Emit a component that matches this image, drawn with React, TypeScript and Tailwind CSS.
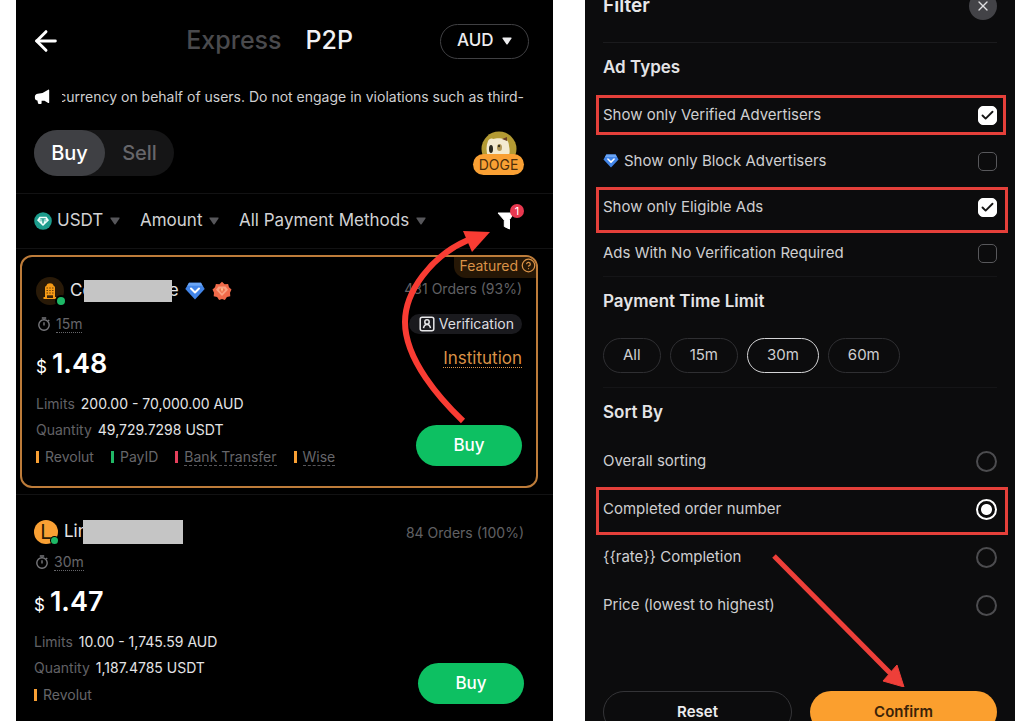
import React, { useState } from "react";
import { ArrowLeft, Check, CircleHelp, X } from "lucide-react";

interface IPayment {
  name: string;
  bar: string;
  hint?: boolean;
}

interface IOfferProps {
  avatar: React.ReactNode;
  name: React.ReactNode;
  time: string;
  price: string;
  limits: string;
  quantity: string;
  orders: string;
  payments: IPayment[];
  extra?: React.ReactNode;
}

interface IFilterSelectProps {
  label: string;
  icon?: React.ReactNode;
}

interface IOptionRowProps {
  id: string;
  label: string;
  icon?: React.ReactNode;
  ring?: string;
  children: React.ReactNode;
  height: string;
}

const MegaphoneIcon = () => (
  <svg viewBox="0 0 16 16" className="h-4 w-4 shrink-0" fill="#fff">
    <path d="M15.200 1.200v12.200c0 .5-.6.8-1 .5L10.500 11.800H7.600v2.200c0 .6-.4 1-1 1H5c-.5 0-.9-.3-1-.8l-.6-2.700C1.900 11.200.9 10.200.9 8.900V7.600c0-1.600 1.200-2.700 2.800-2.900l4.800-.8 5.700-3.200c.4-.3 1 0 1 .5z" />
  </svg>
);

const DogeIcon = () => (
  <svg viewBox="0 0 36 36" className="h-9 w-9">
    <circle cx="18" cy="18" r="17.500" fill="#b39a33" />
    <path d="M7 26c-2-6-2-11 0-16 1-2 3-3 5-2 3-1 8-1 11 0 3 0 5 3 5 7 1 4 1 8-1 11z" fill="#f3ead0" />
    <path d="M21 8l5-2v4z" fill="#6b3f28" />
    <ellipse cx="10" cy="18" rx="2" ry="4" fill="#2b2a20" />
    <ellipse cx="18.500" cy="16.500" rx="2.500" ry="3.500" fill="#b49a5a" />
    <circle cx="18" cy="15" r="1.200" fill="#3b3420" />
  </svg>
);

const UsdtIcon = () => (
  <svg viewBox="0 0 18 18" className="h-[18px] w-[18px] shrink-0">
    <circle cx="9" cy="9" r="8.800" fill="#1c9c8c" />
    <path d="M5.500 4.800h7L15 8.300 9 14 3 8.300z" fill="#f0fffc" />
    <path d="M6.300 6.300h5.400v1.300H9.700v3.800H8.300V7.600h-2z" fill="#1c9c8c" />
    <path d="M5.500 8.800h7" stroke="#1c9c8c" strokeWidth=".6" />
  </svg>
);

const FunnelIcon = () => (
  <svg viewBox="0 0 18 18" className="h-[18px] w-[18px]" fill="#fff">
    <path d="M1 1h16L12.500 7.600V17l-5.200-2.500V8.200z" stroke="#fff" strokeLinejoin="round" />
  </svg>
);

const DiamondIcon = ({ className }: { className: string }) => (
  <svg viewBox="0 0 20 18" className={className}>
    <path d="M4 .8h12l3.700 6.200L10 17.500.3 7z" fill="#4285e8" />
    <path d="M4 .8h12l1.500 3H2.300z" fill="#6aa5f5" />
    <path d="M6 6.500l4 4 4-4" stroke="#fff" strokeWidth="2" fill="none" strokeLinecap="round" strokeLinejoin="round" />
  </svg>
);

const RosetteIcon = () => (
  <svg viewBox="0 0 20 20" className="h-5 w-5">
    <path
      d="M10 .8l2.600 2.400 3.500-.3.900 3.400 2.500 2.300-1.500 3.100.3 3.500-3.400.9L12.900 19 10 17.900 7.100 19l-2-2.900-3.400-.9.300-3.500L.5 8.600 3 6.300l.9-3.400 3.500.3z"
      fill="#f06a4a"
    />
    <path d="M6.500 5.500h7l2.500 3.200-6 6.300-6-6.300z" fill="#f9a182" />
    <path d="M8 7.500h4l1.200 1.600L10 12.500 6.800 9.100z" fill="#ef7350" />
    <path d="M9 7.500h2L10 11z" fill="#ffd9a0" />
  </svg>
);

const BuildingAvatar = () => (
  <span className="relative flex h-7 w-7 items-center justify-center rounded-full bg-[#291a08]">
    <svg viewBox="0 0 16 18" className="h-[18px] w-4">
      <path d="M3 15V5.500C3 4.500 4 4 4.500 3.500 5 2 6 1.200 8 1.200s3 .8 3.500 2.300c.5.500 1.500 1 1.500 2V15h1.500v2h-13v-2z" fill="#f59a16" />
      <path d="M4.500 6h7M4.500 8.500h7M4.500 11h7" stroke="#6b4108" strokeWidth="1.200" strokeDasharray="1.500 1.250" />
      <path d="M5 13.300h6V16H5z" fill="#38220a" />
    </svg>
    <span className="absolute -right-px bottom-0 h-2 w-2 rounded-full bg-[#1db866] ring-2 ring-black" />
  </span>
);

const LetterAvatar = () => (
  <span className="relative flex h-6 w-6 items-center justify-center rounded-full bg-[#f9a034] text-xl text-[#2a1a05]">
    L
    <span className="absolute right-0 bottom-0 h-[7px] w-[7px] rounded-full bg-[#1db866] ring-1 ring-black" />
  </span>
);

const StopwatchIcon = () => (
  <svg viewBox="0 0 14 14" className="h-[14px] w-[14px]" fill="none" stroke="#77777b" strokeWidth="1.400">
    <circle cx="7" cy="8" r="5.200" />
    <path d="M4.800 1h4.400M7 5.200v3.300M11.200 3l1 1" />
  </svg>
);

const VerifyIcon = () => (
  <svg viewBox="0 0 16 16" className="h-4 w-4" fill="none" stroke="#e6e6e8" strokeWidth="1.500">
    <rect x="1.200" y="1.200" width="13.600" height="13.600" rx="2" />
    <circle cx="8" cy="6" r="2.200" />
    <path d="M4.500 12.200c.4-2.400 1.600-3.700 3.500-3.700s3.100 1.300 3.500 3.700" />
  </svg>
);

const Caret = ({ className }: { className: string }) => (
  <svg viewBox="0 0 10 8" className={className} fill="currentColor">
    <path d="M1 .5h8c.5 0 .8.500.5.900L5.600 7.200c-.3.400-.9.400-1.200 0L.5 1.400C.2 1 .5.500 1 .5z" />
  </svg>
);

const FilterSelect = ({ label, icon }: IFilterSelectProps) => (
  <label className="flex items-center text-[#d2d2d4]">
    {icon}
    <select
      aria-label={label}
      className={`appearance-none bg-transparent text-[17px] outline-0 ${icon ? "ml-[5px]" : ""}`}
    >
      <option>{label}</option>
    </select>
    <Caret className="ml-[6px] h-2 w-[10px] text-[#56565a]" />
  </label>
);

const Offer = ({ avatar, name, time, price, limits, quantity, orders, payments, extra }: IOfferProps) => (
  <div className="flex justify-between">
    <div>
      <div className="flex items-center gap-[6px] text-[17px] text-[#e4e4e6]">
        {avatar}
        {name}
      </div>
      <div className="mt-2 flex h-5 items-center gap-[5px] pl-px text-sm text-[#66666a]">
        <StopwatchIcon />
        <span className="border-b border-dotted border-[#66666a] leading-4">{time}</span>
      </div>
      <div className="mt-3 flex h-9 items-baseline gap-[5px] text-white">
        <span className="text-[17px]">$</span>
        <span className="text-[27px] leading-9 font-semibold">{price}</span>
      </div>
      <dl className="mt-[9px] text-sm leading-[26px]">
        <div className="flex gap-[6px]">
          <dt className="text-[#626266]">Limits</dt>
          <dd className="text-[#e4e4e6]">{limits}</dd>
        </div>
        <div className="flex gap-[6px]">
          <dt className="text-[#626266]">Quantity</dt>
          <dd className="text-[#e4e4e6]">{quantity}</dd>
        </div>
      </dl>
      <ul className="flex h-7 items-center gap-[17px] text-sm text-[#66666a]">
        {payments.map((item) => (
          <li key={item.name} className="flex items-center gap-[6px]">
            <span className={`h-3 w-[3px] ${item.bar}`} />
            <span className={item.hint ? "border-b border-dashed border-[#56565a] leading-4" : "leading-4"}>
              {item.name}
            </span>
          </li>
        ))}
      </ul>
    </div>
    <div className="flex flex-col items-end">
      <div className="flex h-[26px] items-center text-sm text-[#606064]">{orders}</div>
      {extra}
      <button className="mt-auto mb-[5px] h-[41px] w-[106px] rounded-full bg-[#0dc062] text-[17px] font-medium text-white">
        Buy
      </button>
    </div>
  </div>
);

const OptionRow = ({ id, label, icon, ring, children, height }: IOptionRowProps) => (
  <div className={`relative flex items-center justify-between ${height}`}>
    {ring && <span className={`pointer-events-none absolute border-[3px] border-[#e5403a] ${ring}`} />}
    <label htmlFor={id} className="flex items-center gap-[5px] text-[15px] text-[#cfcfd1]">
      {icon}
      {label}
    </label>
    {children}
  </div>
);

const adTypes = [
  { id: "verified", label: "Show only Verified Advertisers", checked: true, ring: "inset-y-[3px] -left-[7px] -right-[9px]" },
  { id: "block", label: "Show only Block Advertisers", checked: false, diamond: true },
  { id: "eligible", label: "Show only Eligible Ads", checked: true, ring: "top-[3px] -bottom-[3px] -left-[7px] -right-[11px]" },
  { id: "noverify", label: "Ads With No Verification Required", checked: false },
];

const sortings = [
  { id: "overall", label: "Overall sorting" },
  { id: "completed", label: "Completed order number", ring: "top-[2px] bottom-[-2px] -left-[7px] -right-[11px]" },
  { id: "rate", label: "{{rate}} Completion" },
  { id: "price", label: "Price (lowest to highest)" },
];

const times = ["All", "15m", "30m", "60m"];

const MarketPanel = () => (
  <section className="relative overflow-hidden bg-black">
    <header className="flex h-[82px] items-center pr-6 pl-[18px]">
      <button aria-label="Back" className="mr-auto -ml-1 text-white">
        <ArrowLeft size={32} strokeWidth={2.2} />
      </button>
      <nav className="mr-[87px] flex gap-6 text-[25px] font-medium">
        <button className="text-[#4a4a4d]">Express</button>
        <button className="text-[#f2f2f4]">P2P</button>
      </nav>
      <label className="flex h-[35px] items-center gap-2 rounded-full border border-[#404043] px-4 text-[#ededef]">
        <select aria-label="Currency" className="appearance-none bg-transparent text-[17px] font-medium outline-0">
          <option>AUD</option>
        </select>
        <Caret className="h-2 w-[10px]" />
      </label>
    </header>

    <div className="flex h-[30px] items-center gap-3 pr-[29px] pl-[18px]">
      <MegaphoneIcon />
      <p className="flex min-w-0 flex-1 justify-end overflow-hidden text-sm whitespace-nowrap text-[#cfcfd1]">
        currency on behalf of users. Do not engage in violations such as third-
      </p>
    </div>

    <div className="flex h-[82px] items-center justify-between border-b border-[#121213] pr-[29px] pl-[18px]">
      <div className="flex h-[46px] rounded-full bg-[#151516] text-xl font-medium">
        <button className="w-[71px] rounded-full bg-[#3f4044] text-white">Buy</button>
        <button className="w-[69px] text-[#66666a]">Sell</button>
      </div>
      <div className="relative flex h-11 w-[51px] justify-center">
        <DogeIcon />
        <span className="absolute inset-x-0 bottom-0 rounded-full bg-[#f9a034] text-center text-sm leading-[21px] text-[#4d2e0b]">
          DOGE
        </span>
      </div>
    </div>

    <div className="flex h-[55px] items-center gap-5 border-b border-[#121213] pr-[38px] pl-[18px]">
      <FilterSelect label="USDT" icon={<UsdtIcon />} />
      <FilterSelect label="Amount" />
      <FilterSelect label="All Payment Methods" />
      <button aria-label="Filter" className="relative ml-auto">
        <FunnelIcon />
        <span className="absolute -top-2 -right-[9px] h-[14px] w-[14px] rounded-full bg-[#e8384f] text-center text-[11px] leading-[14px] text-white">
          1
        </span>
      </button>
    </div>

    <article className="relative mt-[6px] mr-[15px] ml-1 rounded-xl border-2 border-[#bd7c3a] px-[14px] pt-[19px] pb-[15px]">
      <span className="absolute top-0 right-0 flex h-[21px] items-center gap-[3px] rounded-tr-[10px] rounded-bl-xl bg-[#261706] pb-1 pl-[5px] text-sm text-[#da9247]">
        Featured <CircleHelp size={15} />
      </span>
      <Offer
        avatar={<BuildingAvatar />}
        name={
          <span className="flex h-[30px] items-center">
            Co
            <span className="relative -ml-[9px] h-[22px] w-[88px] bg-[#c5c5c5]" />
            <span className="-ml-[3px]">e</span>
            <DiamondIcon className="mr-[7px] ml-[6px] h-[18px] w-5" />
            <RosetteIcon />
          </span>
        }
        time="15m"
        price="1.48"
        limits="200.00 - 70,000.00 AUD"
        quantity="49,729.7298 USDT"
        orders="431 Orders (93%)"
        payments={[
          { name: "Revolut", bar: "bg-[#f9a034]" },
          { name: "PayID", bar: "bg-[#21b866]" },
          { name: "Bank Transfer", bar: "bg-[#e5405c]", hint: true },
          { name: "Wise", bar: "bg-[#f9a034]", hint: true },
        ]}
        extra={
          <>
            <span className="mt-3 flex h-5 items-center gap-1 rounded-full bg-[#1a1a1e] pr-2 pl-[10px] text-sm text-[#dedee0]">
              <VerifyIcon />
              Verification
            </span>
            <span className="mt-[15px] border-b border-dotted border-[#da9247] text-[17px] leading-[18px] text-[#da9247]">
              Institution
            </span>
          </>
        }
      />
    </article>

    <div className="mt-[6px] border-t border-[#121213] pt-[25px] pr-[29px] pl-[18px]">
      <Offer
        avatar={<LetterAvatar />}
        name={
          <span className="flex h-6 items-center">
            Lin
            <span className="relative -ml-[5px] h-6 w-[100px] bg-[#c5c5c5]" />
          </span>
        }
        time="30m"
        price="1.47"
        limits="10.00 - 1,745.59 AUD"
        quantity="1,187.4785 USDT"
        orders="84 Orders (100%)"
        payments={[{ name: "Revolut", bar: "bg-[#f9a034]" }]}
      />
    </div>

    <svg
      viewBox="0 0 90 194"
      className="pointer-events-none absolute top-[230px] right-[62px] h-[194px] w-[90px]"
      fill="none"
    >
      <path d="M62 191C40 170 4 130 4 92C4 62 30 26 67 10" stroke="#f93c33" strokeWidth="6" />
      <path d="M62 1l27 1-18 20z" fill="#f93c33" />
    </svg>
  </section>
);

const FilterPanel = () => {
  const [limit, setLimit] = useState("30m");

  return (
    <section className="relative overflow-hidden bg-[#0c0c0d] px-[18px]">
      <header className="-mt-2 flex h-7 items-center justify-between">
        <h2 className="text-[19px] font-semibold text-[#e8e8ea]">Filter</h2>
        <button
          aria-label="Close"
          className="flex h-7 w-7 items-center justify-center rounded-full bg-[#434347] text-[#dedee0]"
        >
          <X size={16} />
        </button>
      </header>

      <h3 className="mt-[22px] flex h-[50px] items-center border-t border-[#1b1b1d] pt-px text-[17px] font-semibold text-[#e4e4e6]">
        Ad Types
      </h3>
      {adTypes.map((item) => (
        <OptionRow
          key={item.id}
          id={item.id}
          label={item.label}
          ring={item.ring}
          height="h-[46px]"
          icon={item.diamond && <DiamondIcon className="h-[14px] w-4" />}
        >
          <span className="relative flex">
            <input
              id={item.id}
              type="checkbox"
              defaultChecked={item.checked}
              className="peer h-[19px] w-[19px] appearance-none rounded-[5px] border border-[#58585b] checked:border-white checked:bg-white"
            />
            <Check
              size={15}
              strokeWidth={3}
              className="pointer-events-none absolute top-[2px] left-[2px] hidden text-[#151515] peer-checked:block"
            />
          </span>
        </OptionRow>
      ))}

      <h3 className="flex h-[50px] items-center border-t border-[#151517] pt-px text-[17px] font-semibold text-[#e4e4e6]">
        Payment Time Limit
      </h3>
      <div className="mt-3 mb-[14px] flex gap-[9px]">
        {times.map((item) => (
          <button
            key={item}
            aria-pressed={limit === item}
            onClick={() => setLimit(item)}
            className={`h-[35px] rounded-full border px-[19px] text-[15px] text-[#cfcfd1] ${
              limit === item ? "border-[#d4d4d6]" : "border-[#2f2f32]"
            }`}
          >
            {item}
          </button>
        ))}
      </div>

      <h3 className="flex h-[50px] items-center border-t border-[#151517] pt-px text-[17px] font-semibold text-[#e4e4e6]">
        Sort By
      </h3>
      {sortings.map((item) => (
        <OptionRow key={item.id} id={item.id} label={item.label} ring={item.ring} height="h-12">
          <input
            id={item.id}
            type="radio"
            name="sort"
            defaultChecked={item.id === "completed"}
            className="h-[21px] w-[21px] appearance-none rounded-full border-2 border-[#4c4c4f] checked:border-white checked:bg-[radial-gradient(circle,#fff_0_5px,transparent_6px)]"
          />
        </OptionRow>
      ))}

      <div className="mt-[62px] flex gap-[18px] text-[15px] font-semibold">
        <button className="h-[42px] flex-1 rounded-full border border-[#343437] text-[#ededef]">Reset</button>
        <button className="h-[42px] flex-1 rounded-full bg-[#fb9f2e] text-[#3a2308]">Confirm</button>
      </div>

      <svg
        viewBox="0 0 134 134"
        className="pointer-events-none absolute top-[553px] right-[110px] h-[134px] w-[134px]"
        fill="none"
      >
        <path d="M3 3l116 117" stroke="#ee3f39" strokeWidth="5" />
        <path d="M112 128l14-16 7 22z" fill="#ee3f39" stroke="#ee3f39" />
      </svg>
    </section>
  );
};

const App = () => (
  <main className="grid h-screen grid-cols-[537fr_430fr] gap-8 overflow-hidden bg-white pr-[9px] pl-4 font-['Inter',sans-serif]">
    <MarketPanel />
    <FilterPanel />
  </main>
);

export default App;
